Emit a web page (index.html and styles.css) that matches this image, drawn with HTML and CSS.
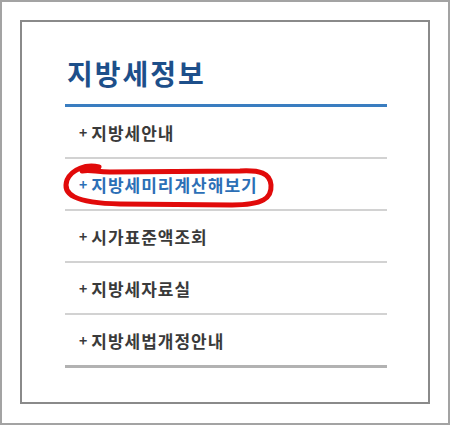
FILE: index.html
```html
<!DOCTYPE html>
<html lang="ko">
<head>
<meta charset="utf-8">
<title>지방세정보</title>
<link rel="stylesheet" href="styles.css">
</head>
<body>
<div class="frame">
  <div class="panel">
    <h1 class="title">지방세정보</h1>
    <ul class="menu">
      <li class="item"><span class="plus">+</span>지방세안내</li>
      <li class="item item-active"><span class="plus">+</span>지방세미리계산해보기</li>
      <li class="item"><span class="plus">+</span>시가표준액조회</li>
      <li class="item"><span class="plus">+</span>지방세자료실</li>
      <li class="item item-last"><span class="plus">+</span>지방세법개정안내</li>
    </ul>
  </div>
  <svg class="scribble" width="450" height="425" viewBox="0 0 450 425">
    <path d="M99 167 C86 164 72 169 67 180 C62 194 74 203 120 204 L232 205 C263 205 272 198 271 185 C270 173 260 170 240 171 L110 172 C96 172 90 169 82 171" fill="none" stroke="#e10a0a" stroke-width="5" stroke-linecap="round" stroke-linejoin="round"/>
  </svg>
</div>
</body>
</html>
```
FILE: styles.css
```css
html, body {
  margin: 0;
  padding: 0;
  background: #ffffff;
}

.frame {
  position: relative;
  width: 450px;
  height: 425px;
  box-sizing: border-box;
  border: 2px solid #a3a3a3;
  padding: 18px 18px 0 18px;
  font-family: "Noto Sans CJK KR", "Noto Sans", sans-serif;
}

.panel {
  width: 410px;
  height: 384px;
  box-sizing: border-box;
  border: 2px solid #8a8a8a;
  padding: 36px 41px 0 43px;
}

.title {
  margin: 0;
  padding: 0 0 16px 2px;
  font-size: 28px;
  line-height: 30px;
  font-weight: 700;
  letter-spacing: 2px;
  color: #1d4f8a;
  border-bottom: 3px solid #3a7dc0;
}

.menu {
  list-style: none;
  margin: 0;
  padding: 0;
}

.item {
  display: flex;
  align-items: center;
  height: 50px;
  padding-left: 14px;
  border-bottom: 2px solid #d2d2d2;
  font-size: 17px;
  font-weight: 700;
  letter-spacing: 1px;
  color: #3a3a3a;
}

.item-active {
  color: #2c6fb6;
}

.item-last {
  border-bottom: 3px solid #b2b2b2;
}

.plus {
  font-size: 14px;
  margin-right: 4px;
  letter-spacing: 0;
}

.scribble {
  position: absolute;
  left: -2px;
  top: -2px;
  pointer-events: none;
}
```
